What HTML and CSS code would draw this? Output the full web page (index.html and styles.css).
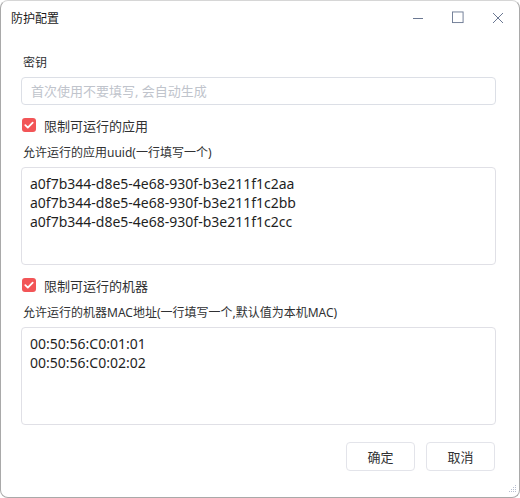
FILE: index.html
```html
<!DOCTYPE html>
<html lang="zh-CN">
<head>
    <meta charset="UTF-8">
    <meta name="viewport" content="width=device-width, initial-scale=1.0">
    <title>防护配置</title>
    <link rel="stylesheet" href="styles.css">
</head>
<body>
    <div class="window">
        <div class="titlebar">
            <span class="title">防护配置</span>
            <div class="controls">
                <span class="ctrl">
                    <svg width="12" height="12" viewBox="0 0 12 12"><path d="M1 6.5h10" stroke="#6b7892" stroke-width="1"/></svg>
                </span>
                <span class="ctrl">
                    <svg width="13" height="13" viewBox="0 0 13 13"><rect x="0.5" y="0.5" width="11.5" height="11.5" fill="none" stroke="#6b7892" stroke-width="1"/></svg>
                </span>
                <span class="ctrl">
                    <svg width="12" height="12" viewBox="0 0 12 12"><path d="M1 1L11 11M11 1L1 11" stroke="#6b7892" stroke-width="1"/></svg>
                </span>
            </div>
        </div>

        <form class="content">
            <label class="field-label">密钥</label>
            <input class="text-input" type="text" placeholder="首次使用不要填写, 会自动生成">

            <label class="check-row">
                <span class="checkbox">
                    <svg width="14" height="14" viewBox="0 0 14 14"><path d="M3.3 7.2l2.5 2.4 4.9-5" fill="none" stroke="#fff" stroke-width="1.8" stroke-linecap="round" stroke-linejoin="round"/></svg>
                </span>
                限制可运行的应用
            </label>

            <label class="field-label">允许运行的应用uuid(一行填写一个)</label>
            <textarea class="text-area">a0f7b344-d8e5-4e68-930f-b3e211f1c2aa
a0f7b344-d8e5-4e68-930f-b3e211f1c2bb
a0f7b344-d8e5-4e68-930f-b3e211f1c2cc</textarea>

            <label class="check-row">
                <span class="checkbox">
                    <svg width="14" height="14" viewBox="0 0 14 14"><path d="M3.3 7.2l2.5 2.4 4.9-5" fill="none" stroke="#fff" stroke-width="1.8" stroke-linecap="round" stroke-linejoin="round"/></svg>
                </span>
                限制可运行的机器
            </label>

            <label class="field-label">允许运行的机器MAC地址(一行填写一个,默认值为本机MAC)</label>
            <textarea class="text-area">00:50:56:C0:01:01
00:50:56:C0:02:02</textarea>

            <div class="actions">
                <button type="button" class="btn">确定</button>
                <button type="button" class="btn">取消</button>
            </div>
        </form>

        <svg class="grip" width="10" height="10" viewBox="0 0 10 10">
            <g fill="#b8bfd0">
                <rect x="8" y="0" width="1" height="1"/>
                <rect x="6" y="2" width="1" height="1"/><rect x="8" y="2" width="1" height="1"/>
                <rect x="4" y="4" width="1" height="1"/><rect x="6" y="4" width="1" height="1"/><rect x="8" y="4" width="1" height="1"/>
                <rect x="2" y="6" width="1" height="1"/><rect x="4" y="6" width="1" height="1"/><rect x="6" y="6" width="1" height="1"/><rect x="8" y="6" width="1" height="1"/>
            </g>
        </svg>
    </div>
</body>
</html>
```

FILE: styles.css
```css
*{
    margin: 0;
    padding: 0;
    box-sizing: border-box;
    font-family: "Noto Sans", "Noto Sans CJK SC", sans-serif;
}
body{
    width: 520px;
    height: 498px;
    background-color: #ffffff;
    overflow: hidden;
}
.window{
    position: relative;
    width: 520px;
    height: 498px;
    background-color: #ffffff;
    border: 1px solid #a9a9a9;
    border-top-color: #d6d6d6;
    border-radius: 8px;
}
.titlebar{
    height: 33px;
    display: flex;
    align-items: center;
    justify-content: space-between;
}
.title{
    padding-left: 10px;
    font-size: 12px;
    color: #1a1a1a;
}
.controls{
    display: flex;
    align-items: center;
    margin-right: 15px;
    gap: 28px;
}
.ctrl{
    display: flex;
    width: 12px;
    height: 13px;
    align-items: center;
    justify-content: center;
}

.content{
    display: flex;
    flex-direction: column;
    padding: 0 23px 0 20px;
}
.field-label{
    display: block;
    height: 20px;
    line-height: 20px;
    padding-left: 2px;
    font-size: 12px;
    color: #303133;
    margin-top: 8px;
    margin-bottom: 4px;
}
.content > .field-label:first-child{
    margin-top: 19px;
}
.text-input{
    height: 28px;
    border: 1px solid #dcdfe6;
    border-radius: 4px;
    padding: 0 9px;
    font-size: 13px;
    color: #303133;
    outline: none;
}
.text-input::placeholder{
    color: #c0c4cc;
}
.check-row{
    display: flex;
    align-items: center;
    height: 20px;
    margin-top: 10px;
    font-size: 13px;
    color: #303133;
    gap: 8px;
    padding-left: 1px;
}
.checkbox{
    display: flex;
    width: 14px;
    height: 14px;
    background-color: #f25557;
    border-radius: 3px;
}
.text-area{
    height: 98px;
    border: 1px solid #e0e0e6;
    border-radius: 4px;
    padding: 6px 8px;
    font-size: 14px;
    line-height: 19px;
    color: #1f1f1f;
    resize: none;
    outline: none;
}
.actions{
    display: flex;
    justify-content: flex-end;
    gap: 11px;
    margin-top: 17px;
    padding-right: 1px;
}
.btn{
    width: 69px;
    height: 29px;
    border: 1px solid #e3e4ea;
    border-radius: 4px;
    background-color: #ffffff;
    font-size: 13px;
    color: #303133;
}
.grip{
    position: absolute;
    right: 2px;
    bottom: 2px;
}
```
